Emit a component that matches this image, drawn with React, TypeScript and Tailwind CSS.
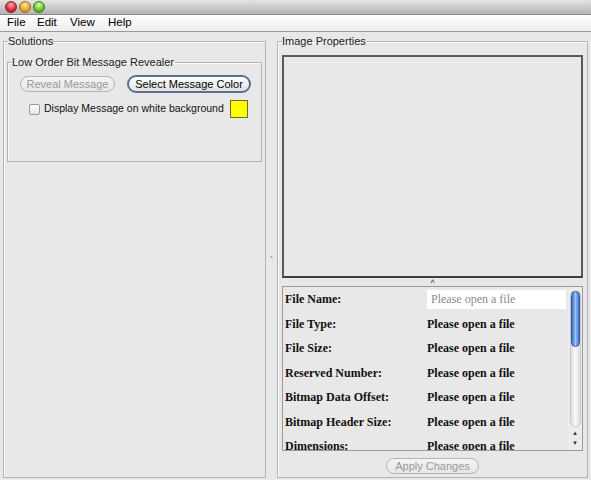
import React from "react";

const rows = [
  "File Name:",
  "File Type:",
  "File Size:",
  "Reserved Number:",
  "Bitmap Data Offset:",
  "Bitmap Header Size:",
  "Dimensions:",
];

const ui = { fontFamily: '"Liberation Sans", Arial, sans-serif' };
const serif = { fontFamily: '"Liberation Serif", "Times New Roman", serif' };

const TitleBar = () => (
  <div className="h-[15px] bg-gradient-to-b from-[#e4e4e4] to-[#b4b4b4] border-b border-[#8a8a8a] flex items-center gap-[2px] pl-[5px]">
    <span className="w-[12px] h-[12px] rounded-full bg-[radial-gradient(circle_at_50%_30%,#ffb0b0,#d6283a_60%,#a01020)] border border-[#8a2030]" />
    <span className="w-[12px] h-[12px] rounded-full bg-[radial-gradient(circle_at_50%_30%,#ffe7a0,#e6a22a_60%,#b07010)] border border-[#9a6a20]" />
    <span className="w-[12px] h-[12px] rounded-full bg-[radial-gradient(circle_at_50%_30%,#d8ffb0,#6cbe2c_60%,#3a8a10)] border border-[#3a7a20]" />
  </div>
);

const MenuBar = () => (
  <div
    className="h-[17px] bg-gradient-to-b from-white to-[#eeeeee] border-b border-[#9a9a9a] flex items-center text-[11.5px] text-black"
    style={ui}
  >
    <span className="pl-[7px] w-[37px]">File</span>
    <span className="w-[33px]">Edit</span>
    <span className="w-[38px]">View</span>
    <span>Help</span>
  </div>
);

const Pill = ({ children, disabled, className }: { children: React.ReactNode; disabled?: boolean; className?: string }) => (
  <button
    className={
      "rounded-full text-[11px] leading-none flex items-center justify-center " +
      (disabled
        ? "border border-[#b4b4b4] text-[#9a9a9a] bg-gradient-to-b from-[#f4f4f4] to-[#e6e6e6] "
        : "border-2 border-[#5d6f93] text-black bg-gradient-to-b from-white to-[#e2e2e2] ") +
      (className ?? "")
    }
    style={ui}
  >
    {children}
  </button>
);

export default function App() {
  return (
    <div className="w-[591px] h-[480px] overflow-hidden bg-[#e8e8e8] flex flex-col">
      <TitleBar />
      <MenuBar />
      <div className="flex-1 flex pl-[3px] pr-[3px] pb-[2px]">
        {/* left panel */}
        <fieldset
          className="w-[262px] border border-[#b4b4b4] shadow-[inset_1px_1px_0_#fafafa] px-[3px] pt-[8px] mt-[3px]"
          style={ui}
        >
          <legend className="text-[11px] text-[#222] ml-[1px] leading-[13px]">Solutions</legend>
          <fieldset className="h-[106px] border border-[#b4b4b4] shadow-[inset_1px_1px_0_#fafafa] pl-[12px] pr-[10px]">
            <legend className="text-[11px] text-[#222] -ml-[8px] pr-[1px] leading-[13px]">
              Low Order Bit Message Revealer
            </legend>
            <div className="flex items-center gap-[12px] mt-[6px]">
              <Pill disabled className="w-[95px] h-[16px]">Reveal Message</Pill>
              <Pill className="w-[124px] h-[18px]">Select Message Color</Pill>
            </div>
            <div className="flex items-center mt-[7px] pl-[9px]">
              <span className="w-[11px] h-[11px] border border-[#9a9a9a] bg-gradient-to-b from-white to-[#e4e4e4] rounded-[2px]" />
              <span className="text-[10.5px] text-[#111] ml-[4px] whitespace-nowrap">
                Display Message on white background
              </span>
              <span className="w-[18px] h-[18px] bg-[#ffff00] border border-[#6a6a3a] ml-[6px]" />
            </div>
          </fieldset>
        </fieldset>

        {/* split divider */}
        <div className="w-[11px] flex items-center justify-center">
          <span className="text-[8px] text-[#333] leading-none mt-[10px]">˄</span>
        </div>

        {/* right panel */}
        <fieldset
          className="flex-1 border border-[#b4b4b4] shadow-[inset_1px_1px_0_#fafafa] px-[4px] mt-[3px] flex flex-col"
          style={ui}
        >
          <legend className="text-[11px] text-[#222] ml-[0px] leading-[13px]">Image Properties</legend>
          <div className="h-[223px] mt-[7px] border-2 border-[#5a5a5a] border-b-[#3e3e3e] bg-[#e9e9e9] shrink-0" />
          <div className="h-[8px] flex items-start justify-center shrink-0">
            <span className="text-[8px] text-[#333] leading-none">˄</span>
          </div>
          <div className="h-[165px] border border-[#9a9a9a] flex overflow-hidden shrink-0">
            <div className="flex-1" style={serif}>
              {rows.map((r, i) => (
                <div key={r} className="h-[24.5px] flex items-center text-[12px] font-bold text-[#111]">
                  <span className="pl-[2px] w-[144px]">{r}</span>
                  {i === 0 ? (
                    <span className="w-[139px] h-[19px] bg-white flex items-center pl-[4px] text-[#8c8c8c] font-normal">
                      Please open a file
                    </span>
                  ) : (
                    <span>Please open a file</span>
                  )}
                </div>
              ))}
            </div>
            <div className="w-[14px] flex flex-col items-center pt-[3px] pb-[1px] bg-[#ececec]">
              <div className="flex-1 w-[11px] rounded-full bg-gradient-to-r from-[#dcdcdc] via-[#fafafa] to-[#dcdcdc] border border-[#c8c8c8] flex flex-col">
                <div className="h-[56px] rounded-full bg-gradient-to-r from-[#3b6fc8] via-[#9cc2f4] to-[#3b6fc8] border border-[#2a5cb0]" />
              </div>
              <div className="h-[22px] flex flex-col items-center justify-center text-[6px] text-[#333] leading-[10px]">
                <span>▲</span>
                <span>▼</span>
              </div>
            </div>
          </div>
          <div className="flex-1 flex items-start justify-center pt-[7px]">
            <Pill disabled className="w-[93px] h-[16px]">Apply Changes</Pill>
          </div>
        </fieldset>
      </div>
    </div>
  );
}
